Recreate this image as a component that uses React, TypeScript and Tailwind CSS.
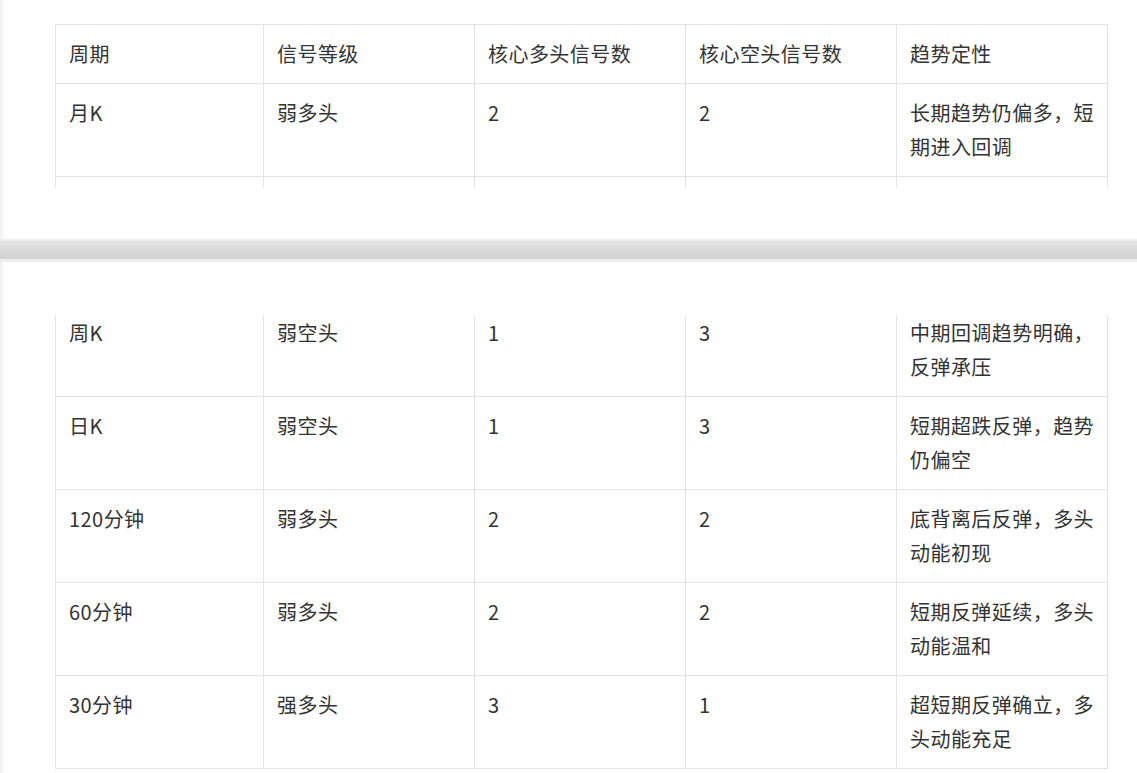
const cols = 'grid grid-cols-[208px_211px_211px_211px_211px]';
const cell = 'border-r border-b border-[#e3e3e6] pl-[13px] pr-[11px] pt-[12px] pb-[12px] text-[20px] leading-[34px] tracking-[0.45px] text-[#333]';

const rowsTop = [['月K', '弱多头', '2', '2', '长期趋势仍偏多，短期进入回调']];

const rowsBottom = [
  ['周K', '弱空头', '1', '3', '中期回调趋势明确，反弹承压'],
  ['日K', '弱空头', '1', '3', '短期超跌反弹，趋势仍偏空'],
  ['120分钟', '弱多头', '2', '2', '底背离后反弹，多头动能初现'],
  ['60分钟', '弱多头', '2', '2', '短期反弹延续，多头动能温和'],
  ['30分钟', '强多头', '3', '1', '超短期反弹确立，多头动能充足'],
];

const Row = ({ cells, first }: { cells: string[]; first?: boolean }) => (
  <div className={cols}>
    {cells.map((c, i) => (
      <div key={i} className={first ? cell.replace('pt-[12px]', 'pt-px') : cell}>
        {c}
      </div>
    ))}
  </div>
);

const App = () => {
  return (
    <div
      className="min-h-screen bg-[#f3f3f3]"
      style={{ fontFamily: '"Noto Sans CJK SC", "Noto Sans", sans-serif' }}
    >
      {/* first page */}
      <div className="ml-[3px] h-[239px] bg-white pt-[24px] pl-[52px] overflow-hidden">
        <div className="w-[1053px] border-l border-t border-[#e3e3e6]">
          <Row cells={['周期', '信号等级', '核心多头信号数', '核心空头信号数', '趋势定性']} />
          {rowsTop.map((r, i) => (
            <Row key={i} cells={r} />
          ))}
          <div className={cols}>
            {[0, 1, 2, 3, 4].map((i) => (
              <div key={i} className="h-[11px] border-r border-[#e3e3e6]" />
            ))}
          </div>
        </div>
      </div>

      {/* page break */}
      <div className="h-[23px] border-t-[2px] border-b-[3px] border-t-[#efefef] border-b-[#ececec] bg-gradient-to-b from-[#e3e3e3] to-[#d1d1d1]" />

      {/* second page */}
      <div className="ml-[3px] bg-white pt-[53px] pl-[52px] pb-[5px]">
        <div className="w-[1053px] border-l border-[#e3e3e6]">
          {rowsBottom.map((r, i) => (
            <Row key={i} cells={r} first={i === 0} />
          ))}
        </div>
      </div>
    </div>
  );
};

export default App;
